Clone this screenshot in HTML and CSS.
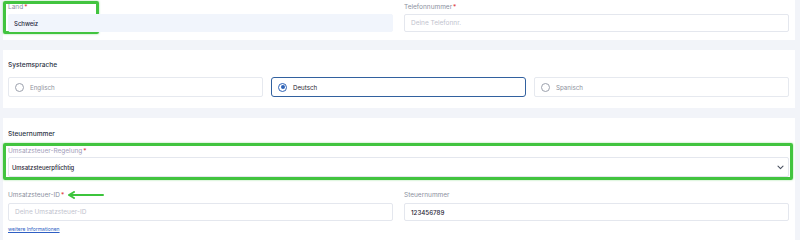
FILE: index.html
```html
<!DOCTYPE html>
<html lang="de">
<head>
    <meta charset="UTF-8">
    <meta name="viewport" content="width=device-width, initial-scale=1.0">
    <title>Einstellungen</title>
    <link rel="stylesheet" href="styles.css">
</head>
<body>
    <div class="page">
        <div class="card card-top">
            <div class="mark mark-land"></div>
            <div class="row2">
                <div class="field">
                    <div class="label">Land<span class="req">*</span></div>
                    <div class="select filled">Schweiz</div>
                </div>
                <div class="field">
                    <div class="label">Telefonnummer<span class="req">*</span></div>
                    <div class="input placeholder">Deine Telefonnr.</div>
                </div>
            </div>
        </div>

        <div class="card card-lang">
            <div class="heading">Systemsprache</div>
            <div class="row3">
                <div class="radio">
                    <span class="dot"></span>
                    <span class="radio-text">Englisch</span>
                </div>
                <div class="radio checked">
                    <span class="dot"></span>
                    <span class="radio-text">Deutsch</span>
                </div>
                <div class="radio">
                    <span class="dot"></span>
                    <span class="radio-text">Spanisch</span>
                </div>
            </div>
        </div>

        <div class="card card-tax">
            <div class="heading">Steuernummer</div>
            <div class="field wide">
                <div class="mark mark-rule"></div>
                <div class="label label-soft">Umsatzsteuer-Regelung<span class="req">*</span></div>
                <div class="input value select-box">
                    <span>Umsatzsteuerpflichtig</span>
                    <svg class="chevron" width="7" height="5" viewBox="0 0 7 5">
                        <path d="M1 1.2 L3.5 3.6 L6 1.2" fill="none" stroke="#4a5160" stroke-width="1.1" stroke-linecap="round" stroke-linejoin="round"/>
                    </svg>
                </div>
            </div>
            <div class="row2 tax-row">
                <div class="field">
                    <div class="label">Umsatzsteuer-ID<span class="req">*</span>
                        <svg class="arrow" width="38" height="8" viewBox="0 0 38 8">
                            <path d="M36 4 L4 4" stroke="#3cc43c" stroke-width="2" stroke-linecap="round"/>
                            <path d="M7 1 L2 4 L7 7" fill="none" stroke="#3cc43c" stroke-width="2" stroke-linecap="round" stroke-linejoin="round"/>
                        </svg>
                    </div>
                    <div class="input placeholder">Deine Umsatzsteuer-ID</div>
                    <a class="more" href="#">weitere Informationen</a>
                </div>
                <div class="field">
                    <div class="label">Steuernummer</div>
                    <div class="input value">123456789</div>
                </div>
            </div>
        </div>
    </div>
</body>
</html>
```

FILE: styles.css
```css
body {
    margin: 0;
    background: #f2f4f9;
    font-family: Inter, "Noto Sans", sans-serif;
    color: #2b3243;
}

.page {
    padding: 0 5px 0 3px;
}

.card {
    position: relative;
    background: #fff;
    padding: 0 6px 0 5px;
}

.card-top {
    padding-top: 2px;
    padding-bottom: 8px;
    margin-bottom: 10px;
}

.card-lang {
    padding-top: 10px;
    padding-bottom: 11px;
    margin-bottom: 10px;
}

.card-tax {
    padding-top: 11px;
    padding-bottom: 20px;
}

.row2 {
    display: grid;
    grid-template-columns: 1fr 1fr;
    gap: 11px;
}

.row3 {
    display: grid;
    grid-template-columns: 1fr 1fr 1fr;
    gap: 8px;
}

.field {
    position: relative;
}

.label {
    display: flex;
    align-items: center;
    height: 10px;
    margin-bottom: 2px;
    font-size: 6.5px;
    color: #8b909e;
}

.label-soft {
    color: #a29eb9;
    margin-bottom: 1px;
}

.req {
    color: #e0403f;
    margin-left: 1px;
}

.heading {
    height: 10px;
    line-height: 10px;
    font-size: 6.6px;
    font-weight: 500;
    color: #2d3446;
    margin-bottom: 7px;
}

.input,
.select {
    display: flex;
    align-items: center;
    box-sizing: border-box;
    height: 18px;
    padding: 0 6px;
    border: 1px solid #e4e7ee;
    border-radius: 2px;
    font-size: 6.5px;
    background: #fff;
}

.select.filled {
    background: #f1f5fc;
    border-color: #f1f5fc;
    color: #1f2640;
    font-weight: 500;
    font-size: 6px;
    padding-left: 5px;
}

.placeholder {
    color: #bfc3ce;
}

.value {
    color: #1f2535;
    font-weight: 500;
    font-size: 6.2px;
}

.select-box {
    height: 20px;
    justify-content: space-between;
    padding-left: 3px;
    padding-right: 4px;
    font-size: 5.9px;
}

.chevron {
    display: block;
}

.radio {
    display: flex;
    align-items: center;
    box-sizing: border-box;
    height: 20px;
    padding: 0 6px;
    border: 1px solid #e6e9ef;
    border-radius: 2px;
    font-size: 6.2px;
    color: #8d919c;
}

.radio .dot {
    box-sizing: border-box;
    width: 9px;
    height: 9px;
    border: 1px solid #9ca1ad;
    border-radius: 50%;
    margin-right: 6px;
    position: relative;
}

.radio.checked {
    border: 1.5px solid #32619f;
    border-radius: 3px;
    color: #1f2535;
}

.radio.checked .dot {
    border-color: #2f63b6;
}

.radio.checked .dot::after {
    content: "";
    position: absolute;
    left: 1.5px;
    top: 1.5px;
    width: 4px;
    height: 4px;
    border-radius: 50%;
    background: #2f63b6;
}

.wide {
    margin-bottom: 13px;
}

.tax-row .label {
    margin-bottom: 3px;
}

.arrow {
    margin-left: 3px;
}

.more {
    display: block;
    margin-top: 5px;
    font-size: 5px;
    color: #2f5fc4;
    text-decoration: underline;
}

/* green highlight annotations */
.mark {
    position: absolute;
    border: 3px solid #42c43f;
    border-radius: 2px;
    box-shadow: 0 0 2px rgba(66, 196, 63, 0.6);
    pointer-events: none;
}

.mark-land {
    left: 0;
    top: 1px;
    width: 90px;
    height: 27px;
}

.mark-rule {
    left: -5px;
    right: -4px;
    top: -3px;
    bottom: -3px;
}
```
